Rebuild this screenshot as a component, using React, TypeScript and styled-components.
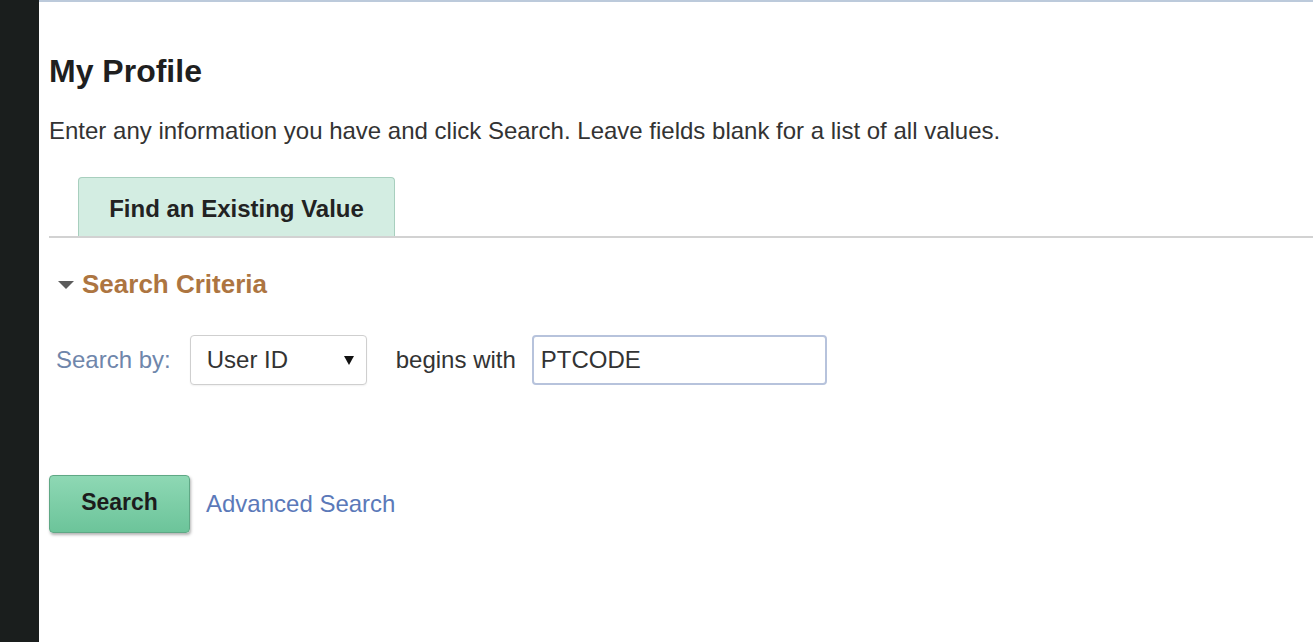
import React from "react";
import styled, { createGlobalStyle } from "styled-components";

const Global = createGlobalStyle`
  html, body { margin: 0; padding: 0; background: #ffffff; }
  body { font-family: "Liberation Sans", Arial, sans-serif; }
  * { box-sizing: border-box; }
`;

const Page = styled.div`
  display: flex;
  width: 1313px;
  height: 642px;
  overflow: hidden;
`;

const Sidebar = styled.div`
  width: 39px;
  flex: none;
  background: #1a1e1d;
`;

const Main = styled.main`
  flex: 1;
  border-top: 2px solid #bccadb;
  padding-left: 10px;
  display: flex;
  flex-direction: column;
  align-items: flex-start;
`;

const Title = styled.h1`
  margin: 50px 0 0 0;
  font-size: 32px;
  line-height: 38px;
  font-weight: bold;
  color: #1f1f1f;
`;

const Intro = styled.p`
  margin: 27px 0 0 0;
  font-size: 24px;
  line-height: 28px;
  color: #333333;
`;

const TabBar = styled.div`
  margin-top: 32px;
  align-self: stretch;
  display: flex;
  border-bottom: 2px solid #d2d2d2;
  padding-left: 29px;
`;

const Tab = styled.div<{ $active?: boolean }>`
  width: 317px;
  height: 59px;
  display: flex;
  align-items: center;
  justify-content: center;
  padding-top: 3px;
  background: ${(p) => (p.$active ? "#d3ede2" : "#eeeeee")};
  border: 1px solid #a8cfbe;
  border-bottom: none;
  border-radius: 4px 4px 0 0;
  font-size: 24px;
  font-weight: bold;
  color: #222222;
`;

const SectionHeader = styled.div`
  margin-top: 31px;
  display: flex;
  align-items: center;
  height: 30px;
  padding-left: 9px;
`;

const Caret = styled.span`
  width: 0;
  height: 0;
  border-left: 8px solid transparent;
  border-right: 8px solid transparent;
  border-top: 8px solid #5c5c5c;
  margin-right: 8px;
  margin-top: 1px;
`;

const SectionTitle = styled.span`
  font-size: 26px;
  line-height: 30px;
  font-weight: bold;
  color: #ad7541;
`;

const CriteriaRow = styled.div`
  margin-top: 36px;
  display: flex;
  align-items: center;
  padding-left: 7px;
`;

const Label = styled.span<{ $muted?: boolean }>`
  font-size: 24px;
  color: ${(p) => (p.$muted ? "#6f86ab" : "#333333")};
`;

const Select = styled.div`
  margin-left: 19px;
  width: 177px;
  height: 50px;
  border: 1px solid #cfcfcf;
  border-radius: 4px;
  display: flex;
  align-items: center;
  justify-content: space-between;
  padding: 0 12px 0 16px;
  font-size: 24px;
  color: #333333;
  background: #ffffff;
  box-shadow: 0 1px 2px rgba(0, 0, 0, 0.06);
`;

const Arrow = styled.span`
  width: 0;
  height: 0;
  border-left: 5px solid transparent;
  border-right: 5px solid transparent;
  border-top: 9px solid #111111;
`;

const Op = styled(Label)`
  margin-left: 29px;
`;

const Input = styled.div`
  margin-left: 16px;
  width: 295px;
  height: 50px;
  border: 2px solid #b7c3dc;
  border-radius: 4px;
  display: flex;
  align-items: center;
  padding-left: 7px;
  font-size: 24px;
  color: #333333;
`;

const ActionRow = styled.div`
  margin-top: 90px;
  display: flex;
  align-items: center;
  gap: 16px;
`;

const Button = styled.button`
  width: 141px;
  height: 58px;
  border: 1px solid #5fa885;
  border-radius: 4px;
  background: linear-gradient(#8ed8b4, #6cc49a);
  box-shadow: 1px 2px 3px rgba(0, 0, 0, 0.3);
  font-family: "Liberation Sans", Arial, sans-serif;
  font-size: 23px;
  font-weight: bold;
  color: #1c1c1c;
  padding: 0 0 4px 0;
`;

const Link = styled.a`
  font-size: 24px;
  color: #5b79b9;
  text-decoration: none;
`;

export default function App() {
  return (
    <>
      <Global />
      <Page>
        <Sidebar />
        <Main>
          <Title>My Profile</Title>
          <Intro>
            Enter any information you have and click Search. Leave fields blank for a list of all values.
          </Intro>
          <TabBar>
            <Tab $active>Find an Existing Value</Tab>
          </TabBar>
          <SectionHeader>
            <Caret />
            <SectionTitle>Search Criteria</SectionTitle>
          </SectionHeader>
          <CriteriaRow>
            <Label $muted>Search by:</Label>
            <Select>
              <span>User ID</span>
              <Arrow />
            </Select>
            <Op>begins with</Op>
            <Input>PTCODE</Input>
          </CriteriaRow>
          <ActionRow>
            <Button>Search</Button>
            <Link href="#">Advanced Search</Link>
          </ActionRow>
        </Main>
      </Page>
    </>
  );
}
